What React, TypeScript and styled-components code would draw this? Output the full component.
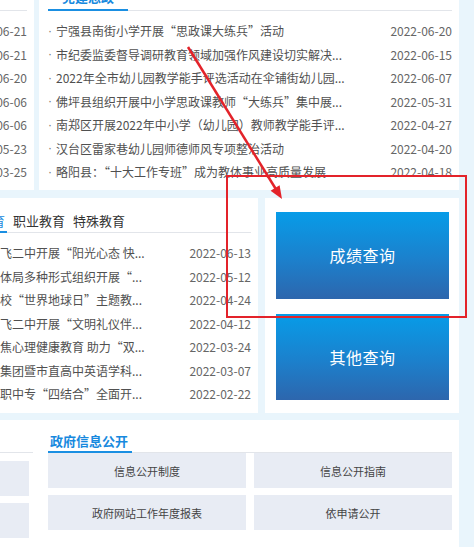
import styled, { createGlobalStyle } from "styled-components";

const GlobalStyle = createGlobalStyle`
  html, body {
    margin: 0;
    padding: 0;
    background: #e9f5fc;
  }
  body {
    font-family: "Noto Sans CJK SC", "Noto Sans", sans-serif;
  }
`;

const Viewport = styled.div`
  position: relative;
  width: 474px;
  height: 547px;
  overflow: hidden;
  background: #e9f5fc;
`;

/* the page is wider than the window: it is scrolled a little right and down */
const Page = styled.div`
  width: 598px;
  margin: -22px 0 0 -124px;
  display: flex;
  flex-direction: column;
`;

const Row = styled.div<{ $gap: number; $top?: number }>`
  display: flex;
  align-items: stretch;
  gap: ${(p) => p.$gap}px;
  margin-top: ${(p) => p.$top ?? 0}px;
`;

const Card = styled.div<{ $w: number; $h: number; $pl?: number }>`
  width: ${(p) => p.$w}px;
  height: ${(p) => p.$h}px;
  box-sizing: border-box;
  padding: 0 7px 0 ${(p) => p.$pl ?? 10}px;
  background: #fff;
  flex-shrink: 0;
`;

const Header = styled.div<{ $h?: number }>`
  height: ${(p) => p.$h ?? 33}px;
  box-sizing: border-box;
  display: flex;
  align-items: flex-end;
  border-bottom: 1px solid #e2e5ea;
`;

const Title = styled.div<{ $pad: string }>`
  padding: ${(p) => p.$pad};
  margin-bottom: -1px;
  font-size: 13px;
  font-weight: 700;
  line-height: 20px;
  color: #1789de;
  border-bottom: 2px solid #1a8fe2;
`;

const Tabs = styled.div`
  display: flex;
  padding-left: 7px;
  margin-bottom: -1px;
`;

const Tab = styled.div<{ $active?: boolean }>`
  padding: 0 2px;
  margin-right: 4px;
  font-size: 13px;
  line-height: 20px;
  color: ${(p) => (p.$active ? "#1789de" : "#333")};
  border-bottom: 2px solid ${(p) => (p.$active ? "#1a8fe2" : "transparent")};
`;

const List = styled.ul<{ $top?: number }>`
  list-style: none;
  margin: ${(p) => p.$top ?? 8}px 0 0;
  padding: 0;
`;

const Item = styled.li`
  display: flex;
  align-items: center;
  height: 23.5px;
  font-size: 12px;
  color: #505050;
`;

const Dot = styled.span`
  width: 8px;
  flex-shrink: 0;
  font-family: "Liberation Sans", sans-serif;
  color: #777;
`;

const ItemText = styled.span`
  flex: 1;
  min-width: 0;
  white-space: nowrap;
  overflow: hidden;
  text-overflow: ellipsis;
`;

const ItemDate = styled.span`
  flex-shrink: 0;
  margin-left: 10px;
  color: #666;
`;

const QueryCard = styled.div`
  width: 194px;
  height: 215px;
  box-sizing: border-box;
  padding: 14px 10px 13px 11px;
  display: flex;
  flex-direction: column;
  gap: 15px;
  background: #fff;
  flex-shrink: 0;
`;

const QueryButton = styled.a`
  flex: 1;
  display: flex;
  align-items: center;
  justify-content: center;
  background: linear-gradient(180deg, #079ce8 0%, #1c80cc 55%, #2d66ad 100%);
  color: #fff;
  font-size: 16px;
  letter-spacing: 0.5px;
  text-decoration: none;
`;

const InfoCard = styled.div`
  width: 583px;
  height: 160px;
  box-sizing: border-box;
  padding: 0 7px 0 10px;
  display: flex;
  gap: 15px;
  background: #fff;
  flex-shrink: 0;
`;

const Section = styled.div<{ $w: number }>`
  width: ${(p) => p.$w}px;
  flex-shrink: 0;
`;

const Grid = styled.div<{ $cols: number; $inset: string }>`
  display: grid;
  grid-template-columns: repeat(${(p) => p.$cols}, 1fr);
  gap: 7px 8px;
  margin: 8px ${(p) => p.$inset};
`;

const InfoBox = styled.a`
  height: 35px;
  display: flex;
  align-items: center;
  justify-content: center;
  background: #e8ecf4;
  font-size: 11px;
  color: #444;
  text-decoration: none;
`;

const Marks = styled.svg`
  position: absolute;
  left: 0;
  top: 0;
  pointer-events: none;
`;

type News = { t: string; d: string };

const leftNews: News[] = [
  { t: "全省教育会议", d: "2022-06-21" },
  { t: "暑期安全工作", d: "2022-06-21" },
  { t: "防溺水教育", d: "2022-06-20" },
  { t: "党史学习教育", d: "2022-06-06" },
  { t: "中考工作安排", d: "2022-06-06" },
  { t: "师德师风培训", d: "2022-05-23" },
  { t: "安全生产会议", d: "2022-03-25" },
];

const countyNews: News[] = [
  { t: "宁强县南街小学开展“思政课大练兵”活动", d: "2022-06-20" },
  { t: "市纪委监委督导调研教育领域加强作风建设切实解决...", d: "2022-06-15" },
  { t: "2022年全市幼儿园教学能手评选活动在伞铺街幼儿园...", d: "2022-06-07" },
  { t: "佛坪县组织开展中小学思政课教师“大练兵”集中展...", d: "2022-05-31" },
  { t: "南郑区开展2022年中小学（幼儿园）教师教学能手评...", d: "2022-04-27" },
  { t: "汉台区雷家巷幼儿园师德师风专项整治活动", d: "2022-04-20" },
  { t: "略阳县：“十大工作专班”成为教体事业高质量发展...", d: "2022-04-18" },
];

const schoolNews: News[] = [
  { t: "汉中龙岗学校与勉县飞二中开展“阳光心态 快...", d: "2022-06-13" },
  { t: "城固县教育局和县文体局多种形式组织开展“...", d: "2022-05-12" },
  { t: "西乡县沙河镇中心学校“世界地球日”主题教...", d: "2022-04-24" },
  { t: "汉中龙岗学校与勉县飞二中开展“文明礼仪伴...", d: "2022-04-12" },
  { t: "宁强县第一中学：聚焦心理健康教育 助力“双...", d: "2022-03-24" },
  { t: "汉中市龙岗学校教育集团暨市直高中英语学科...", d: "2022-03-07" },
  { t: "城固县职教中心城固职中专“四结合”全面开...", d: "2022-02-22" },
];

const NewsList = ({ items, top }: { items: News[]; top?: number }) => (
  <List $top={top}>
    {items.map((n, i) => (
      <Item key={i}>
        <Dot>·</Dot>
        <ItemText>{n.t}</ItemText>
        <ItemDate>{n.d}</ItemDate>
      </Item>
    ))}
  </List>
);

const App = () => {
  return (
    <Viewport>
      <GlobalStyle />
      <Page>
        <Row $gap={5}>
          <Card $w={158} $h={212}>
            <Header>
              <Title $pad="0 14px 2px">通知公告</Title>
            </Header>
            <NewsList items={leftNews} />
          </Card>
          <Card $w={420} $h={212} $pl={9}>
            <Header>
              <Title $pad="0 14px 2px">党建思政</Title>
            </Header>
            <NewsList items={countyNews} />
          </Card>
        </Row>

        <Row $gap={7} $top={8}>
          <Card $w={382} $h={215} $pl={8}>
            <Header $h={35}>
              <Tabs>
                <Tab>学前教育</Tab>
                <Tab $active>基础教育</Tab>
                <Tab>职业教育</Tab>
                <Tab>特殊教育</Tab>
              </Tabs>
            </Header>
            <NewsList items={schoolNews} />
          </Card>
          <QueryCard>
            <QueryButton href="#score">成绩查询</QueryButton>
            <QueryButton href="#other">其他查询</QueryButton>
          </QueryCard>
        </Row>

        <Row $gap={0} $top={7}>
          <InfoCard>
            <Section $w={147}>
              <Header>
                <Title $pad="0 4px 0 2px">专题专栏</Title>
              </Header>
              <Grid $cols={1} $inset="4px 0 6px">
                <InfoBox href="#a">政策文件</InfoBox>
                <InfoBox href="#b">政策解读</InfoBox>
              </Grid>
            </Section>
            <Section $w={404}>
              <Header>
                <Title $pad="0 4px 0 2px">政府信息公开</Title>
              </Header>
              <Grid $cols={2} $inset="0 7px 0 4px">
                <InfoBox href="#zd">信息公开制度</InfoBox>
                <InfoBox href="#zn">信息公开指南</InfoBox>
                <InfoBox href="#nb">政府网站工作年度报表</InfoBox>
                <InfoBox href="#ysq">依申请公开</InfoBox>
              </Grid>
            </Section>
          </InfoCard>
        </Row>
      </Page>

      <Marks width="474" height="547" viewBox="0 0 474 547">
        <rect x="227" y="176" width="239" height="141" fill="none" stroke="#e3232a" strokeWidth="2" />
        <line x1="188" y1="47" x2="275.5" y2="188.5" stroke="#e3232a" strokeWidth="2.5" />
        <polygon points="282,199 270.6,190.8 279.6,185.2" fill="#e3232a" />
      </Marks>
    </Viewport>
  );
};

export default App;
